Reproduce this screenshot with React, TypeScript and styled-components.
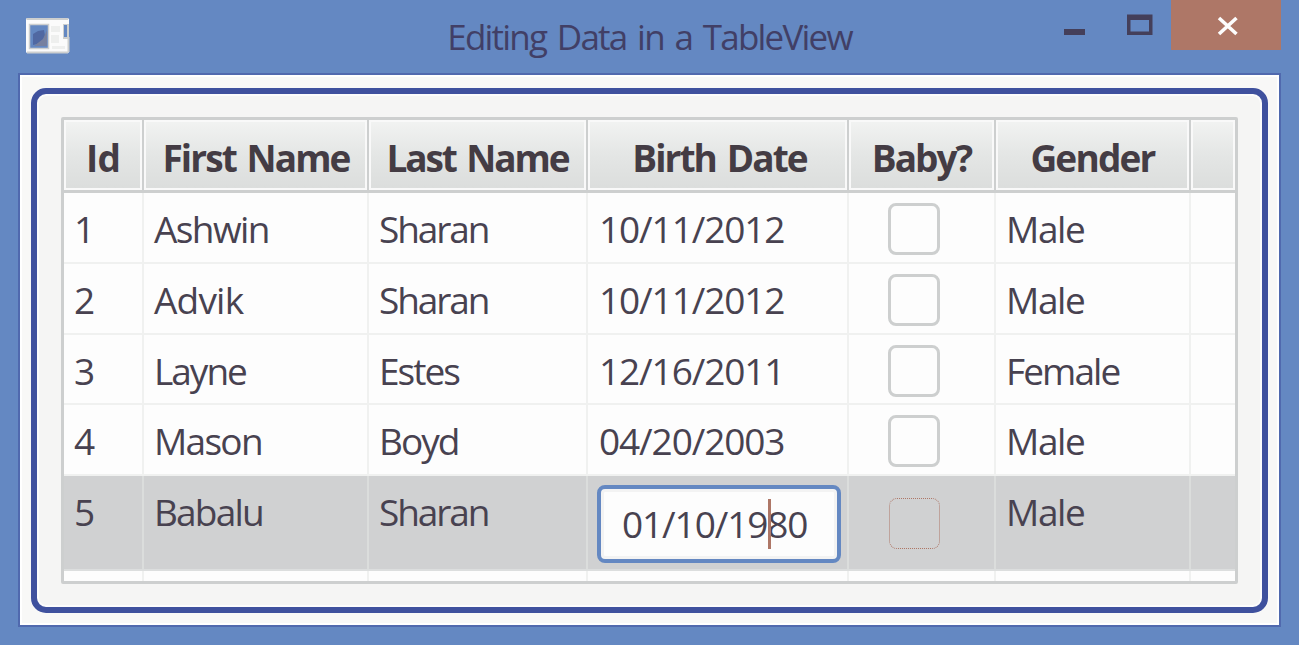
import React from 'react';
import styled, { createGlobalStyle, css } from 'styled-components';

const GlobalStyle = createGlobalStyle`
  * { box-sizing: border-box; }
  html, body { margin: 0; padding: 0; background: #6488c2; overflow: hidden; }
`;

const Window = styled.div`
  width: 1299px;
  height: 645px;
  padding: 0 18px 18px;
  display: flex;
  flex-direction: column;
  background: #6488c2;
  color: #484250;
  font-family: 'Open Sans', 'Noto Sans', sans-serif;
`;

const TitleBar = styled.header`
  height: 73px;
  flex: none;
  display: grid;
  grid-template-columns: 236px 1fr 236px;
`;

const AppIcon = styled.svg`
  margin: 17px 0 0 7px;
`;

const Title = styled.h1`
  margin: 0;
  text-align: center;
  font-size: 35px;
  line-height: 73px;
  font-weight: 400;
  letter-spacing: -1.8px;
  word-spacing: 3.4px;
  white-space: nowrap;
  color: #413f66;
`;

const Controls = styled.div`
  display: flex;
  justify-content: flex-end;
  height: 50px;
`;

const ControlButton = styled.button<{ $width: number; $danger?: boolean }>`
  width: ${(p) => p.$width}px;
  height: ${(p) => (p.$danger ? 49.5 : 49)}px;
  padding: 0;
  border: 0;
  background: ${(p) => (p.$danger ? '#ae7767' : 'transparent')};
  svg { display: block; }
`;

const Client = styled.main`
  flex: 1;
  padding: 13px 11px 12px;
  border: 2px solid #5069ae;
  background: #f8f8f7;
  box-shadow: inset 0 0 0 2px #ffffff;
`;

const Frame = styled.section`
  height: 100%;
  padding: 23px 24px;
  border: 6px solid #3f519e;
  border-radius: 15px;
  background: #f5f5f4;
  box-shadow: inset 0 0 0 2px #fcfcfc;
`;

const Table = styled.div`
  height: 467px;
  display: flex;
  flex-direction: column;
  border: 3px solid #cdcfcf;
  border-radius: 2px;
  background: #fdfdfd;
  overflow: hidden;
`;

const columns = css`
  display: grid;
  grid-template-columns: 80px 225px 219px 261px 147px 195px 1fr;
  grid-template-rows: 100%;
`;

const HeaderRow = styled.div`
  ${columns}
  height: 73px;
  flex: none;
  border-bottom: 3px solid #cdcfcf;
`;

const HeaderCell = styled.div<{ $spacing: number; $shift?: number }>`
  padding-left: ${(p) => p.$shift ?? 0}px;
  border-right: 2.5px solid #cdcfcf;
  box-shadow: inset 0 0 0 2px #f9f9f9;
  background: linear-gradient(#f2f3f2, #e4e6e5 50%, #dbdddc);
  text-align: center;
  font-size: 37px;
  font-weight: 700;
  line-height: 76px;
  letter-spacing: ${(p) => p.$spacing}px;
  word-spacing: 3px;
  white-space: nowrap;
  color: #443c44;
  &:last-child { border-right: 0; }
`;

const Row = styled.div<{ $selected?: boolean; $filler?: boolean }>`
  ${columns}
  height: ${(p) => (p.$filler ? 12 : p.$selected ? 95 : 70.75)}px;
  flex: none;
  border-bottom: ${(p) => (p.$filler ? 0 : 2)}px solid ${(p) => (p.$selected ? '#dcdede' : '#f0f1f0')};
  background: ${(p) => (p.$selected ? '#d0d1d2' : '#fdfdfd')};
`;

const Cell = styled.div<{ $selected?: boolean; $spacing?: number; $pad?: number }>`
  padding-left: ${(p) => p.$pad ?? 10}px;
  border-right: 2.5px solid ${(p) => (p.$selected ? '#dbdddc' : '#f0f1f0')};
  font-size: 37px;
  line-height: 72px;
  letter-spacing: ${(p) => p.$spacing ?? 0}px;
  white-space: nowrap;
  &:last-child { border-right: 0; }
`;

const CheckBox = styled.span<{ $selected?: boolean }>`
  display: block;
  width: ${(p) => (p.$selected ? 51 : 52)}px;
  height: ${(p) => (p.$selected ? 51 : 52)}px;
  margin: ${(p) => (p.$selected ? '22px 0 0 30px' : '10px 0 0 29px')};
  border: ${(p) => (p.$selected ? '1px dotted #ae7767' : '3px solid #cdcfcf')};
  border-radius: 8px;
`;

const Editor = styled.div`
  position: relative;
  width: 244px;
  height: 78px;
  margin: 9px 0 0 -2px;
  padding-left: 21px;
  border: 4px solid #6488c2;
  border-radius: 8px;
  background: #fdfdfd;
  box-shadow: inset 0 0 0 3px #f3f3f3;
  line-height: 70px;
`;

const Caret = styled.span`
  position: absolute;
  left: 167px;
  top: 10px;
  width: 3px;
  height: 50px;
  background: #ae7767;
`;

const headers: { text: string; spacing: number; shift?: number }[] = [
  { text: 'Id', spacing: -0.8 },
  { text: 'First Name', spacing: -1.9, shift: 1 },
  { text: 'Last Name', spacing: -2.1 },
  { text: 'Birth Date', spacing: -1.9, shift: 4 },
  { text: 'Baby?', spacing: -2 },
  { text: 'Gender', spacing: -1.8 },
  { text: '', spacing: 0 },
];

/* Letter spacing that gives each value its column-text width. */
const tracking: Record<string, number> = {
  Ashwin: -1.6,
  Advik: -0.8,
  Layne: -2,
  Mason: -1.7,
  Babalu: -1.8,
  Sharan: -2.1,
  Estes: -2,
  Boyd: -2,
  Male: -1.4,
  Female: -1.9,
};

interface Person {
  id: number;
  first: string;
  last: string;
  birth: string;
  gender: string;
}

const people: Person[] = [
  { id: 1, first: 'Ashwin', last: 'Sharan', birth: '10/11/2012', gender: 'Male' },
  { id: 2, first: 'Advik', last: 'Sharan', birth: '10/11/2012', gender: 'Male' },
  { id: 3, first: 'Layne', last: 'Estes', birth: '12/16/2011', gender: 'Female' },
  { id: 4, first: 'Mason', last: 'Boyd', birth: '04/20/2003', gender: 'Male' },
  { id: 5, first: 'Babalu', last: 'Sharan', birth: '01/10/1980', gender: 'Male' },
];

const editingId = 5;

export default function App() {
  return (
    <Window>
      <GlobalStyle />
      <TitleBar>
        <AppIcon width="46" height="38" viewBox="0 0 46 38">
          <rect x="1" y="1" width="43" height="35" rx="1.5" fill="#fbfbfb" />
          <path d="M1.5 2H43M43.5 20V35M2 35.5H43" stroke="#cdcfcf" strokeWidth="2" fill="none" />
          <rect x="4.5" y="7.5" width="19" height="24" fill="#6488c2" stroke="#cdcfcf" strokeWidth="1.5" />
          <path d="M8 17l5-3 6-1 1 6-4 7-8 2z" fill="#5068a2" />
          <path d="M9 29l9-7 4-9v16z" fill="#77809f" />
          <path d="M26 9h9v6h-9zM26 18h8v8h-8zM27 29h13v3H27z" fill="#eeefee" />
          <path d="M38 7h6v15h-6z" fill="#cdcfcf" />
          <path d="M39 8h3v12h-3z" fill="#6488c2" />
        </AppIcon>
        <Title>Editing Data in a TableView</Title>
        <Controls>
          <ControlButton $width={66} aria-label="Minimize">
            <svg width="66" height="49">
              <rect x="23" y="29" width="21" height="6" fill="#443f5a" />
            </svg>
          </ControlButton>
          <ControlButton $width={64} aria-label="Maximize">
            <svg width="64" height="49">
              <path fillRule="evenodd" d="M20 14.5h25.5v20.5H20zM23.5 20v11.5h18.5V20z" fill="#443f5a" />
            </svg>
          </ControlButton>
          <ControlButton $width={110} $danger aria-label="Close">
            <svg width="110" height="49">
              <path d="M48 18L65.5 34M65.5 18L48 34" stroke="#fdfdfd" strokeWidth="3.6" />
            </svg>
          </ControlButton>
        </Controls>
      </TitleBar>
      <Client>
        <Frame>
          <Table>
            <HeaderRow>
              {headers.map((h, i) => (
                <HeaderCell key={i} $spacing={h.spacing} $shift={h.shift}>{h.text}</HeaderCell>
              ))}
            </HeaderRow>
            {people.map((p) => {
              const selected = p.id === editingId;
              return (
                <Row key={p.id} $selected={selected}>
                  <Cell $selected={selected}>{p.id}</Cell>
                  <Cell $selected={selected} $spacing={tracking[p.first]}>{p.first}</Cell>
                  <Cell $selected={selected} $spacing={tracking[p.last]}>{p.last}</Cell>
                  <Cell $selected={selected} $pad={11} $spacing={-1.1}>
                    {selected ? <Editor>{p.birth}<Caret /></Editor> : p.birth}
                  </Cell>
                  <Cell $selected={selected}><CheckBox $selected={selected} /></Cell>
                  <Cell $selected={selected} $spacing={tracking[p.gender]}>{p.gender}</Cell>
                  <Cell $selected={selected} />
                </Row>
              );
            })}
            <Row $filler>
              {headers.map((_, i) => <Cell key={i} />)}
            </Row>
          </Table>
        </Frame>
      </Client>
    </Window>
  );
}
